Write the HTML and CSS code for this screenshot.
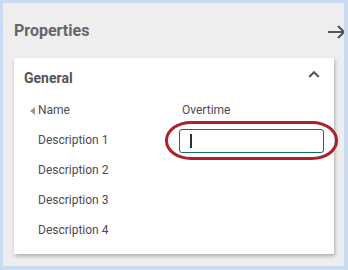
FILE: index.html
```html
<!DOCTYPE html>
<html>
<head>
<meta charset="utf-8">
<link rel="stylesheet" href="styles.css">
</head>
<body>
<div class="panel">
  <div class="panel-header">
    <span class="panel-title">Properties</span>
    <svg class="arrow" width="18" height="24" viewBox="0 0 18 24"><path d="M1 13 H16.5 M11 7 L17 13 L11 19" fill="none" stroke="#555" stroke-width="2"/></svg>
  </div>
  <div class="card">
    <div class="card-header">
      <span class="card-title">General</span>
      <svg class="chev" width="12" height="12" viewBox="0 0 12 12"><path d="M1.2 7 L6 2.2 L10.8 7" fill="none" stroke="#555" stroke-width="2"/></svg>
    </div>
    <div class="grid">
      <div class="label name-row"><span class="tri"></span>Name</div>
      <div class="value name-row head">Overtime</div>
      <div class="label">Description 1</div>
      <div class="value"><div class="field"><span class="caret"></span></div></div>
      <div class="label">Description 2</div>
      <div class="value"></div>
      <div class="label">Description 3</div>
      <div class="value"></div>
      <div class="label">Description 4</div>
      <div class="value"></div>
    </div>
    <div class="highlight"></div>
  </div>
</div>
</body>
</html>
```
FILE: styles.css
```css
html, body {
  margin: 0;
  padding: 0;
}
body {
  background: #c8dbf2;
  width: 348px;
  height: 270px;
  overflow: hidden;
  font-family: Roboto, "Liberation Sans", sans-serif;
}
.panel {
  margin: 3px 4px 0 3px;
  width: 341px;
  height: 263px;
  background: #eeeeee;
  box-sizing: border-box;
  padding: 16px 10px 0 11px;
  overflow: hidden;
  position: relative;
}
.panel-header {
  display: flex;
  justify-content: space-between;
  align-items: flex-start;
  height: 24px;
  margin-right: -10px;
}
.panel-title {
  font-size: 16px;
  font-weight: 700;
  line-height: 24px;
  color: #666666;
}
.arrow {
  display: block;
  margin-right: -1px;
}
.card {
  margin-top: 15px;
  height: 196px;
  background: #ffffff;
  box-shadow: 1px 2px 4px rgba(0, 0, 0, 0.28);
  position: relative;
}
.card-header {
  display: flex;
  justify-content: space-between;
  align-items: center;
  height: 20px;
  padding: 10px 14px 7px 10px;
}
.card-title {
  font-size: 14px;
  font-weight: 700;
  line-height: 20px;
  color: #555555;
}
.chev {
  display: block;
  margin-top: -4px;
}
.grid {
  display: grid;
  grid-template-columns: 141px 155px;
  grid-auto-rows: 30px;
  padding-left: 24px;
}
.grid .name-row {
  height: 31px;
}
.label, .value {
  font-size: 12px;
  line-height: 30px;
  color: #4c4c55;
}
.value {
  display: flex;
  align-items: center;
}
.value.head {
  padding-left: 3px;
  align-items: flex-start;
}
.tri {
  display: inline-block;
  width: 0;
  height: 0;
  border-right: 5px solid #9a9a9a;
  border-top: 4px solid transparent;
  border-bottom: 4px solid transparent;
  margin-left: -8px;
  margin-right: 3px;
  vertical-align: -0.5px;
}
.field {
  width: 145px;
  height: 24px;
  box-sizing: border-box;
  border: 1px solid #13705a;
  border-radius: 3px;
  display: flex;
  align-items: center;
  padding-left: 10px;
  margin-top: 1px;
}
.caret {
  width: 1.5px;
  height: 14px;
  background: #27303f;
}
.highlight {
  position: absolute;
  left: 151px;
  top: 63px;
  width: 173px;
  height: 39px;
  box-sizing: border-box;
  border: 3.5px solid #b0202a;
  border-radius: 26px / 19px;
}
```
